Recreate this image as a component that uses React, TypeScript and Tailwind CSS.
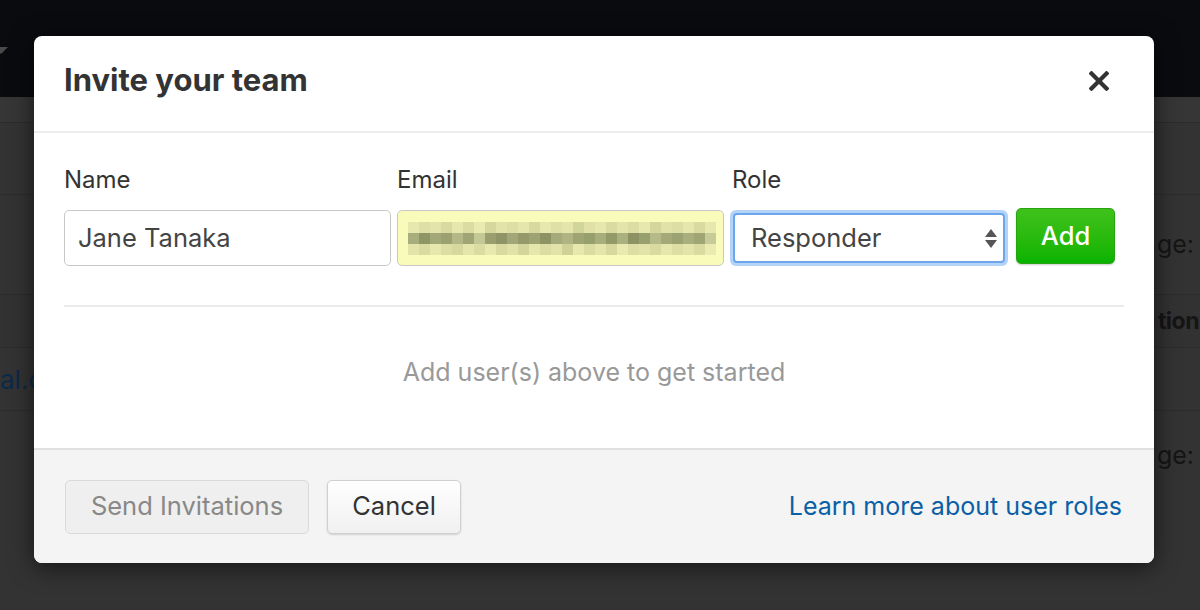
import React from 'react'

const blurTop = ['#e6e8ae', '#dcdfa6', '#e2e4ab', '#d8da9f', '#e5e7ad', '#dadca2', '#e8eab0', '#d5d89c', '#e1e3a9', '#dcdea4', '#e4e6ac', '#d7d99e', '#e6e8ae', '#dee0a6', '#e3e5ab', '#d2d599', '#dfe1a7', '#e5e7ad', '#d9dba1', '#e2e4aa', '#dbdda3', '#e6e8ae', '#d4d79b', '#e0e2a8', '#dcdfa4', '#e4e6ab', '#d8da9f', '#e6e8ae']
const blurMid = ['#a7ad7c', '#8f9666', '#a3a878', '#9ca172', '#b3b886', '#a0a575', '#c4c894', '#9a9f70', '#8e9466', '#a2a777', '#95996b', '#9ea373', '#8d9365', '#a5aa7a', '#b0b483', '#9fa474', '#96a06c', '#a8ad7c', '#939a6a', '#aab07e', '#8c9264', '#99a06f', '#b5ba88', '#a4a979', '#9da272', '#a9ae7d', '#a0a575', '#c7cb98']
const blurBot = ['#e2e4aa', '#d9dba1', '#e6e8ae', '#dcdea4', '#d6d89d', '#e4e6ac', '#dadca2', '#e7e9af', '#d8daa0', '#e0e2a8', '#d3d69a', '#e5e7ad', '#dbdda3', '#e1e3a9', '#cfd296', '#e6e8ae', '#dadca2', '#e3e5ab', '#d6d89d', '#e8eab0', '#dcdea4', '#e1e3a9', '#d8daa0', '#e5e7ad', '#dcdea4', '#e2e4aa', '#d9dba1', '#e9ebb1']

function BlurredEmail() {
  const rows = [blurTop, blurMid, blurBot]
  return (
    <div className="flex flex-col">
      {rows.map((row, i) => (
        <div key={i} className="flex">
          {row.map((c, j) => (
            <div key={j} className="w-[11px] h-[11px]" style={{ backgroundColor: c }} />
          ))}
        </div>
      ))}
    </div>
  )
}

function Background() {
  return (
    <div className="flex flex-col w-full h-full">
      <div className="h-[97px] bg-[#0a0b0f] relative">
        <div className="absolute left-0 top-[47px] w-0 h-0 border-l-[7px] border-r-[7px] border-t-[7px] border-l-transparent border-r-transparent border-t-[#4a4a4a] -ml-[6px]" />
      </div>
      <div className="h-[26px] bg-[#363636] border-b border-[#2c2c2c]" />
      <div className="h-[72px] bg-[#333333] border-b border-[#2c2c2c]" />
      <div className="h-[100px] bg-[#333333] border-b border-[#2c2c2c] flex items-center justify-end pr-[6px]">
        <span className="text-[25px] text-[#151515]">ge:</span>
      </div>
      <div className="h-[53px] bg-[#323232] border-b border-[#2c2c2c] flex items-center justify-end pr-[1px]">
        <span className="text-[23px] font-bold text-[#151515] tracking-[-0.5px]">tion</span>
      </div>
      <div className="h-[63px] bg-[#333333] border-b border-[#2c2c2c] flex items-center">
        <span className="text-[26px] text-[#0b2a4a]">al.com</span>
      </div>
      <div className="h-[110px] bg-[#333333] flex items-center justify-end pr-[6px] pb-[20px]">
        <span className="text-[25px] text-[#151515]">ge:</span>
      </div>
      <div className="flex-1 bg-[#333333]" />
    </div>
  )
}

function CloseIcon() {
  return (
    <svg width="20" height="20" viewBox="0 0 20 20">
      <path d="M2.5 2.5 L17.5 17.5 M17.5 2.5 L2.5 17.5" stroke="#333" strokeWidth="4.2" strokeLinecap="square" />
    </svg>
  )
}

function InviteModal() {
  return (
    <div className="absolute left-[34px] top-[36px] w-[1120px] h-[527px] bg-white rounded-[8px] overflow-hidden shadow-[0_4px_24px_rgba(0,0,0,0.6)] flex flex-col">
      <div className="h-[97px] border-b-2 border-[#ededed] flex items-center justify-between pl-[30px] pr-[45px] pb-[7px]">
        <h1 className="text-[31px] font-bold text-[#333]">Invite your team</h1>
        <button className="mt-[1px]">
          <CloseIcon />
        </button>
      </div>

      <div className="px-[30px] pt-[32px]">
        <div className="flex items-end">
          <div className="w-[327px] mr-[6px] flex flex-col">
            <label className="text-[24px] text-[#333] leading-[30px] mb-[15px]">Name</label>
            <div className="h-[56px] border border-[#c8c8c8] rounded-[5px] flex items-center px-[13px] text-[25.5px] text-[#444]">
              Jane Tanaka
            </div>
          </div>
          <div className="w-[327px] mr-[6px] flex flex-col">
            <label className="text-[24px] text-[#333] leading-[30px] mb-[15px]">Email</label>
            <div className="h-[56px] border border-[#c8c8c8] rounded-[5px] bg-[#f9fbbb] flex items-center px-[10px]">
              <BlurredEmail />
            </div>
          </div>
          <div className="w-[278px] mr-[8px] flex flex-col">
            <label className="text-[24px] text-[#333] leading-[30px] mb-[15px] ml-[2px]">Role</label>
            <div className="h-[56px] p-[3px] rounded-[6px] bg-[#b3d3f8]">
              <div className="h-full border-2 border-[#6ea6ec] rounded-[4px] bg-white flex items-center justify-between pl-[16px] pr-[6px]">
                <span className="text-[25.5px] text-[#444]">Responder</span>
                <div className="flex flex-col items-center gap-[3px]">
                  <div className="w-0 h-0 border-l-[6px] border-r-[6px] border-b-[8px] border-l-transparent border-r-transparent border-b-[#555]" />
                  <div className="w-0 h-0 border-l-[6px] border-r-[6px] border-t-[8px] border-l-transparent border-r-transparent border-t-[#555]" />
                </div>
              </div>
            </div>
          </div>
          <button className="w-[99px] h-[56px] mb-[2px] rounded-[5px] border border-[#2aa313] bg-gradient-to-b from-[#3ec21a] to-[#05b300] text-white text-[25.5px] font-medium shadow-[0_1px_2px_rgba(0,0,0,0.2)]">
            Add
          </button>
        </div>

        <div className="mt-[39px] border-t-2 border-[#ebebeb]" />
        <div className="pt-[50px] pb-[61px] text-center text-[25px] leading-[30px] text-[#999]">
          Add user(s) above to get started
        </div>
      </div>

      <div className="flex-1 border-t-2 border-[#e0e0e0] bg-[#f4f4f4] flex items-center pl-[31px] pr-[32px]">
        <button className="w-[244px] h-[54px] rounded-[5px] border border-[#dadada] bg-[#efefef] text-[25.5px] text-[#888]">
          Send Invitations
        </button>
        <button className="ml-[18px] w-[134px] h-[54px] rounded-[5px] border border-[#cfcfcf] bg-gradient-to-b from-white to-[#f0f0f0] text-[25.5px] text-[#333] shadow-[0_1px_2px_rgba(0,0,0,0.15)]">
          Cancel
        </button>
        <a href="#" className="ml-auto text-[25px] text-[#0b5fa5]">
          Learn more about user roles
        </a>
      </div>
    </div>
  )
}

export default function App() {
  return (
    <div className="w-[1200px] h-[610px] relative overflow-hidden bg-[#333] font-['Inter',sans-serif]">
      <Background />
      <InviteModal />
    </div>
  )
}
